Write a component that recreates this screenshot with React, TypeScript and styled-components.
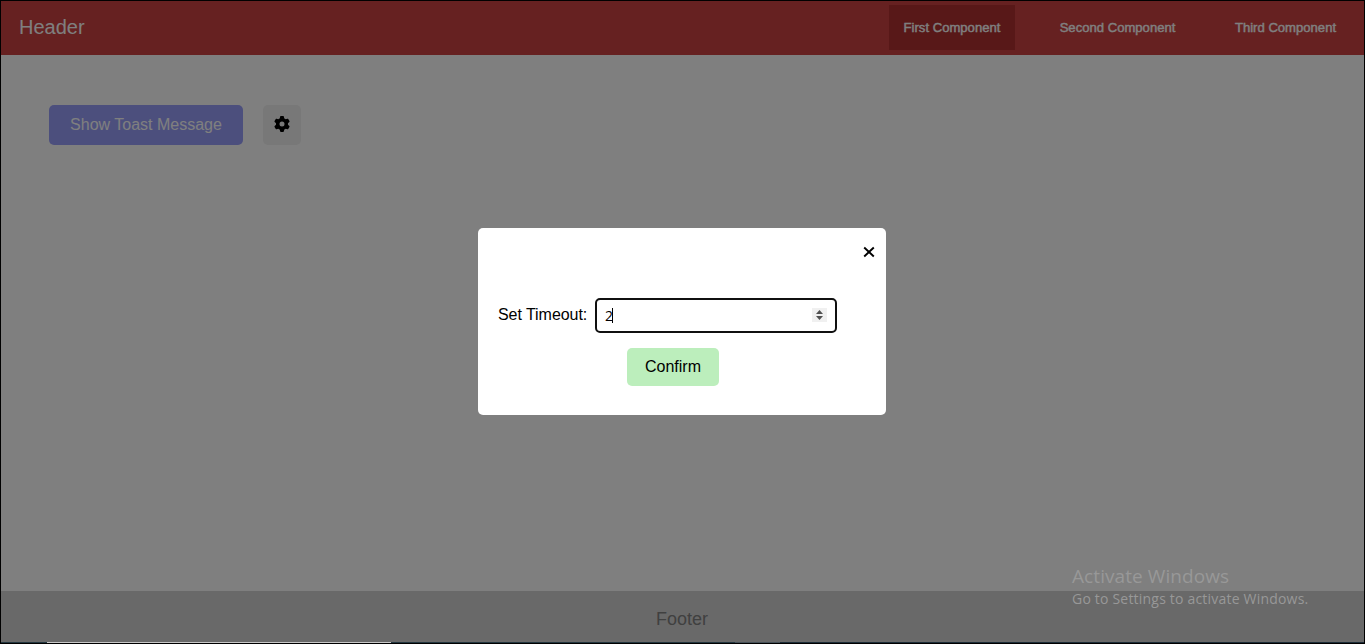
import React from "react";
import styled, { createGlobalStyle } from "styled-components";
import { FaGear } from "react-icons/fa6";

const GlobalStyle = createGlobalStyle`
  * { box-sizing: border-box; }
  body { margin: 0; font-family: "Liberation Sans", Arial, sans-serif; }
  button, input { font-family: inherit; }
`;

const Screen = styled.div`
  position: relative;
  width: 1365px;
  height: 644px;
  border: 1px solid #000;
  display: flex;
  flex-direction: column;
  overflow: hidden;
  background: #fff;
`;

const Header = styled.header`
  height: 54px;
  flex: none;
  display: flex;
  align-items: center;
  justify-content: space-between;
  padding: 0 13px 0 18px;
  background: #cc4242;
  color: #fff;
`;

const Title = styled.div`
  font-size: 20px;
  line-height: 24px;
  padding-bottom: 2px;
`;

const Nav = styled.nav`
  display: flex;
  gap: 30px;
  padding-bottom: 1px;
`;

const NavItem = styled.a<{ $active?: boolean; $width: number }>`
  width: ${(p) => p.$width}px;
  height: 45px;
  display: flex;
  align-items: center;
  justify-content: center;
  font-size: 13.1px;
  -webkit-text-stroke: 0.4px currentColor;
  white-space: nowrap;
  background: ${(p) => (p.$active ? "#b03030" : "transparent")};
`;

const Main = styled.main`
  flex: 1;
  display: flex;
  align-items: flex-start;
  gap: 20px;
  padding: 50px 48px;
`;

const ToastButton = styled.button`
  width: 194px;
  height: 40px;
  border: 0;
  border-radius: 5px;
  background: #989efa;
  color: #fff;
  font-size: 16px;
  padding: 0;
`;

const SettingsButton = styled.button`
  width: 38px;
  height: 40px;
  border: 0;
  border-radius: 5px;
  padding: 0 0 2px;
  display: flex;
  align-items: center;
  justify-content: center;
  background: #f0f0f0;
  color: #000;
`;

const Footer = styled.footer`
  height: 51px;
  flex: none;
  display: flex;
  align-items: center;
  justify-content: center;
  padding: 6px 1px 0 0;
  background: #d3d3d3;
  color: #808080;
  font-size: 18px;
`;

const Taskbar = styled.div`
  height: 1px;
  flex: none;
  display: flex;
  background: #1d2d38;
`;

const TaskSegment = styled.div<{ $width: number; $color: string }>`
  width: ${(p) => p.$width}px;
  background: ${(p) => p.$color};
`;

const Overlay = styled.div`
  position: absolute;
  inset: 0 0 1px;
  display: flex;
  align-items: flex-start;
  justify-content: center;
  padding: 227px 1px 0 0;
  background: rgba(0, 0, 0, 0.5);
`;

const Dialog = styled.div`
  width: 408px;
  height: 187px;
  display: flex;
  flex-direction: column;
  background: #fff;
  border-radius: 5px;
  padding: 18px 11px 0 20px;
`;

const CloseButton = styled.button`
  align-self: flex-end;
  width: 12px;
  height: 12px;
  border: 0;
  padding: 0;
  background: none;
  svg { display: block; }
`;

const Field = styled.label`
  display: flex;
  align-items: center;
  margin-top: 40px;
  font-size: 16px;
  color: #000;
`;

const FieldLabel = styled.span`
  width: 97px;
  white-space: nowrap;
  padding-bottom: 1px;
  letter-spacing: -0.05px;
`;

const NumberBox = styled.span`
  width: 242px;
  height: 35px;
  display: flex;
  align-items: center;
  padding: 0 8px 1px;
  border: 2px solid #101010;
  border-radius: 5px;
  font: 14px "Open Sans", sans-serif;
`;

const Caret = styled.span`
  width: 1px;
  height: 15px;
  margin-left: -1px;
  background: #000;
`;

const Spinner = styled.span`
  width: 15px;
  height: 14px;
  margin-left: auto;
  background: #f0f0f0;
  svg { display: block; }
`;

const ConfirmButton = styled.button`
  width: 92px;
  height: 38px;
  margin: 15px 0 0 129px;
  border: 0;
  border-radius: 5px;
  padding: 0;
  background: #bceebc;
  color: #000;
  font-size: 16px;
`;

const Watermark = styled.div`
  position: absolute;
  left: 1071px;
  top: 563px;
  font-family: "Open Sans", sans-serif;
  color: #989898;
  white-space: nowrap;
`;

const WatermarkTitle = styled.div`
  font-size: 19px;
  line-height: 24px;
  letter-spacing: 0.08px;
`;

const WatermarkText = styled.div`
  font-size: 14px;
  line-height: 21px;
  letter-spacing: 0.2px;
`;

export default function App() {
  return (
    <>
      <GlobalStyle />
      <Screen>
        <Header>
          <Title>Header</Title>
          <Nav>
            <NavItem $active $width={126}>First Component</NavItem>
            <NavItem $width={145}>Second Component</NavItem>
            <NavItem $width={131}>Third Component</NavItem>
          </Nav>
        </Header>
        <Main>
          <ToastButton>Show Toast Message</ToastButton>
          <SettingsButton aria-label="Settings">
            <FaGear size={16} />
          </SettingsButton>
        </Main>
        <Footer>Footer</Footer>
        <Overlay>
          <Dialog role="dialog">
            <CloseButton aria-label="Close">
              <svg width="12" height="12" viewBox="0 0 12 12" stroke="#000" strokeWidth="1.9">
                <path d="M1.2 1.5 10.8 10.5M10.8 1.5 1.2 10.5" />
              </svg>
            </CloseButton>
            <Field>
              <FieldLabel>Set Timeout:</FieldLabel>
              <NumberBox>
                2<Caret />
                <Spinner>
                  <svg width="15" height="14" viewBox="0 0 15 14" fill="#505050">
                    <path d="M4 6 7.5 2 11 6zM4 8h7l-3.500 4z" />
                  </svg>
                </Spinner>
              </NumberBox>
            </Field>
            <ConfirmButton>Confirm</ConfirmButton>
          </Dialog>
        </Overlay>
        <Taskbar>
          <TaskSegment $width={46} $color="#23363f" />
          <TaskSegment $width={344} $color="#c8c8c8" />
          <TaskSegment $width={344} $color="#23363f" />
          <TaskSegment $width={45} $color="#465158" />
        </Taskbar>
        <Watermark>
          <WatermarkTitle>Activate Windows</WatermarkTitle>
          <WatermarkText>Go to Settings to activate Windows.</WatermarkText>
        </Watermark>
      </Screen>
    </>
  );
}
